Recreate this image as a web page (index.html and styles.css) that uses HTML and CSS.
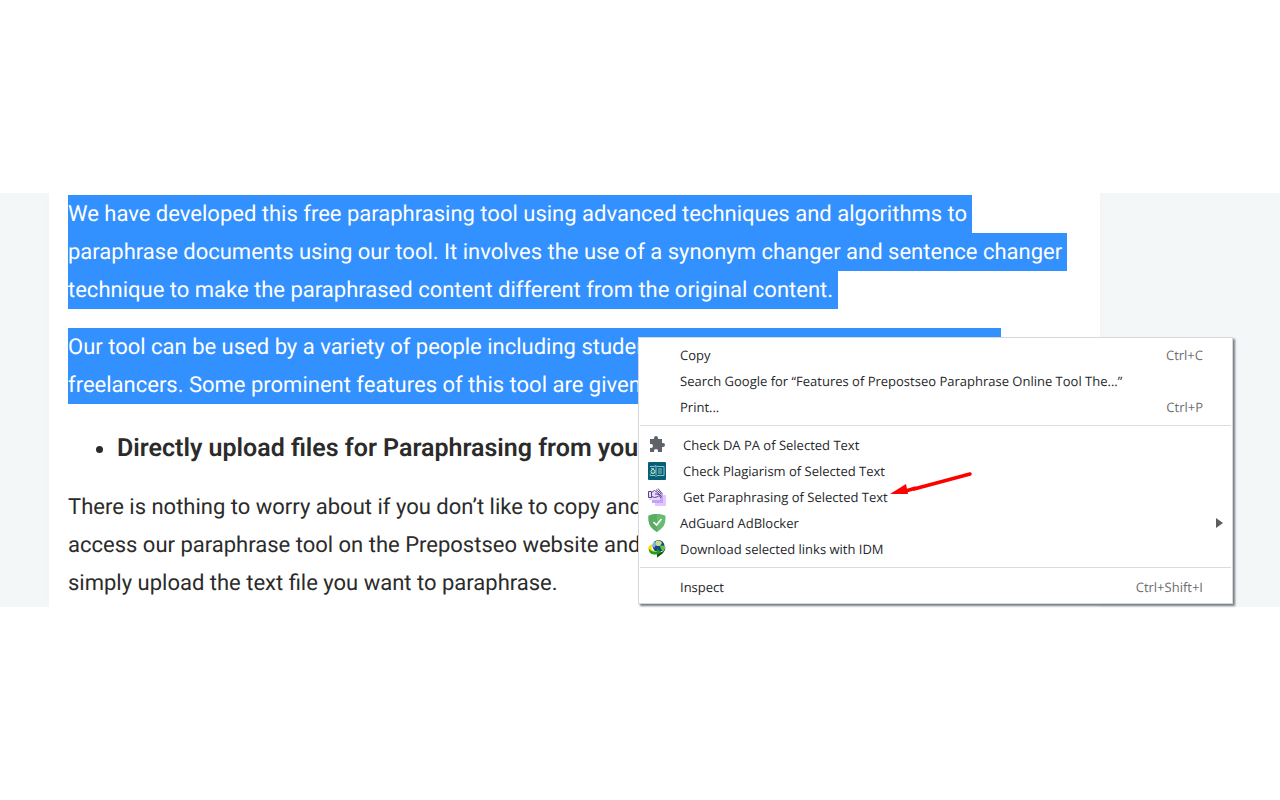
FILE: index.html
```html
<!DOCTYPE html>
<html lang="en">
<head>
<meta charset="utf-8">
<title>Paraphrase Online Tool</title>
<link rel="stylesheet" href="styles.css">
</head>
<body>
<main class="band">
  <article class="card">
    <p class="copy"><mark class="line">We have developed this free paraphrasing tool using advanced techniques and algorithms to</mark>
      <mark class="line">paraphrase documents using our tool. It involves the use of a synonym changer and sentence changer</mark>
      <mark class="line">technique to make the paraphrased content different from the original content.</mark></p>
    <p class="copy"><mark class="line line-long">Our tool can be used by a variety of people including students</mark>
      <mark class="line line-mid">freelancers. Some prominent features of this tool are given</mark></p>
    <ul class="features"><li>Directly upload files for Paraphrasing from your</li></ul>
    <p class="copy"><span class="line">There is nothing to worry about if you don’t like to copy and</span>
      <span class="line">access our paraphrase tool on the Prepostseo website and</span>
      <span class="line">simply upload the text file you want to paraphrase.</span></p>
  </article>

  <div class="menu" role="menu">
    <button class="item" role="menuitem"><span class="icon"></span><span class="label">Copy</span><span class="keys">Ctrl+C</span></button>
    <button class="item" role="menuitem"><span class="icon"></span><span class="label">Search Google for “Features of Prepostseo Paraphrase Online Tool The...”</span></button>
    <button class="item" role="menuitem"><span class="icon"></span><span class="label">Print...</span><span class="keys">Ctrl+P</span></button>
    <hr class="rule">
    <button class="item extension" role="menuitem">
      <svg class="icon" viewBox="0 0 18 18"><path fill="#5f6368" d="M2 3h4V2a2 2 0 0 1 4 0v1h4v4h1a2 2 0 0 1 0 4h-1v5h-4v-1a2 2 0 0 0-4 0v1H2v-4h1a2 2 0 0 0 0-4H2z"/></svg>
      <span class="label">Check DA PA of Selected Text</span></button>
    <button class="item extension" role="menuitem">
      <svg class="icon" viewBox="0 0 18 18"><rect width="18" height="18" rx="1" fill="#075f76"/><path d="M2 4.500h4l2-1 1 1h7v9H9l-1 1-1-1H2M8 4v9M10 7h4M10 9h4M10 11h4M3 6.500h3" fill="none" stroke="#8dc3c9"/><circle cx="5" cy="9.500" r="2" fill="#075f76" stroke="#d4eeee"/><path d="M3.500 11 1.500 13M4 9.500l1 1 2-2" fill="none" stroke="#51c66b"/></svg>
      <span class="label">Check Plagiarism of Selected Text</span></button>
    <button class="item extension" role="menuitem">
      <svg class="icon" viewBox="0 0 18 18"><path fill="#dfc8fb" d="M7 7h11v11H7z"/><path fill="#c9a0f5" d="M4 5h11v10H4z"/><path fill="#ead9fd" d="M1 4h11v8H1z"/><path d="M.5 3.500h3v6h-3zM3.500 4.500l3-2 3 2 4 4M3.500 8.500l3 1 4-1M7 6h3l3 4M8 1.500l5 4M10 .5l4 5" fill="none" stroke="#554787"/></svg>
      <span class="label">Get Paraphrasing of Selected Text</span></button>
    <button class="item" role="menuitem">
      <svg class="icon" viewBox="0 0 18 18"><path fill="#68bc71" d="M9 0c3 0 6 .6 8.500 1.800 0 6.200.2 11-8.500 16.200C.3 12.800.5 8 .5 1.800 3 .6 6 0 9 0z"/><path fill="#5aad65" d="M9 0v18C.3 12.800.5 8 .5 1.800 3 .6 6 0 9 0z"/><path d="m5.500 8 3 3 5-6" fill="none" stroke="#fff" stroke-width="1.600"/></svg>
      <span class="label">AdGuard AdBlocker</span><span class="submenu"></span></button>
    <button class="item" role="menuitem">
      <svg class="icon" viewBox="0 0 18 18"><circle cx="10.500" cy="6" r="6" fill="#12488e"/><path d="M8 1c3-1 5 0 6 2l-2 3-3 0-2-2z" fill="#c9da8a"/><path d="M7 1C4 3 4 6 6 8l2-3z" fill="#7fb4d4"/><path d="M4 4C-1 6-1 11 3 13c2 1 4 1 6 1v-3c-5 1-6-2-5-7z" fill="#f4dc18"/><path d="M1 9c0 5 4 6 8 5.500V17.500l6-4.500-6-4v2.500C5 12 3 11 1 9z" fill="#1f9e1b"/><path d="M9 14.500v3l6-4.500 2-3 .5-4c-1 4-3 6-5 7z" fill="#174b1a"/><path d="M12 6c3-1 5 0 5 2 0 1-1 2-2 3l-2-2z" fill="#67c832"/></svg>
      <span class="label">Download selected links with IDM</span></button>
    <hr class="rule">
    <button class="item" role="menuitem"><span class="icon"></span><span class="label">Inspect</span><span class="keys">Ctrl+Shift+I</span></button>
  </div>
  <svg class="arrow" viewBox="0 0 84 28"><path d="M80 4 24 19" stroke="#f00" stroke-width="3.500" stroke-linecap="round"/><path d="M0 24 16 14l2 10z" fill="#f00"/><path d="M12 22 26 18" stroke="#f00" stroke-width="3.500"/></svg>
</main>
</body>
</html>
```
FILE: styles.css
```css
* { box-sizing: border-box; }

body {
  margin: 0;
  min-height: 100vh;
  display: flex;
  flex-direction: column;
  justify-content: center;
  background: #fff;
  font-family: Roboto, sans-serif;
  color: #2b2b2b;
}

.band {
  position: relative;
  padding: 0 180px 0 49px;
  background: #f4f7f8;
}

.card {
  padding: 2px 19px 4px;
  background: #fff;
  box-shadow: 0 0 8px #f1f1f1;
  clip-path: inset(0 -8px);
}

.copy {
  margin: 0 0 19px;
  font-size: 22px;
  line-height: 38px;
  white-space: nowrap;
  text-rendering: geometricPrecision;
}
.copy:last-child { margin-bottom: 0; }

.line {
  display: block;
  width: fit-content;
}
mark.line {
  padding: 2px 5px 0 0;
  background: #3390ff;
  color: #fff;
  line-height: 36px;
}
mark.line-long { width: 933px; }
mark.line-mid { width: 640px; }

.features {
  margin: 0 0 14px;
  padding-left: 49px;
  font-size: 25px;
  font-weight: 600;
  line-height: 52px;
  white-space: nowrap;
  text-rendering: geometricPrecision;
}

.menu {
  position: absolute;
  top: 144px;
  left: 638px;
  width: 595px;
  padding: 4px 1px 3px;
  border: 1px solid #d5d8dc;
  background: #fff;
  box-shadow: 2px 2px 2px #777c80;
}

.item {
  display: flex;
  align-items: center;
  width: 100%;
  height: 26px;
  padding: 0 28px 0 8px;
  border: 0;
  background: none;
  color: #25272b;
  font: 13px/26px "Open Sans", sans-serif;
  text-rendering: geometricPrecision;
  text-align: left;
  white-space: nowrap;
}

.icon {
  flex: none;
  width: 18px;
  height: 18px;
  margin-right: 14px;
}
.extension .icon { margin-right: 17px; }

.label { flex: 1; }
.keys { color: #6b6d70; }

.submenu {
  margin-right: -20px;
  border: solid transparent;
  border-width: 5px 0 5px 7px;
  border-left-color: #5c5e60;
}

.rule {
  height: 1px;
  margin: 5px 0 6px;
  border: 0;
  background: #dcdcdf;
}

.arrow {
  position: absolute;
  top: 277px;
  left: 890px;
  width: 84px;
  height: 28px;
  fill: none;
}
```
